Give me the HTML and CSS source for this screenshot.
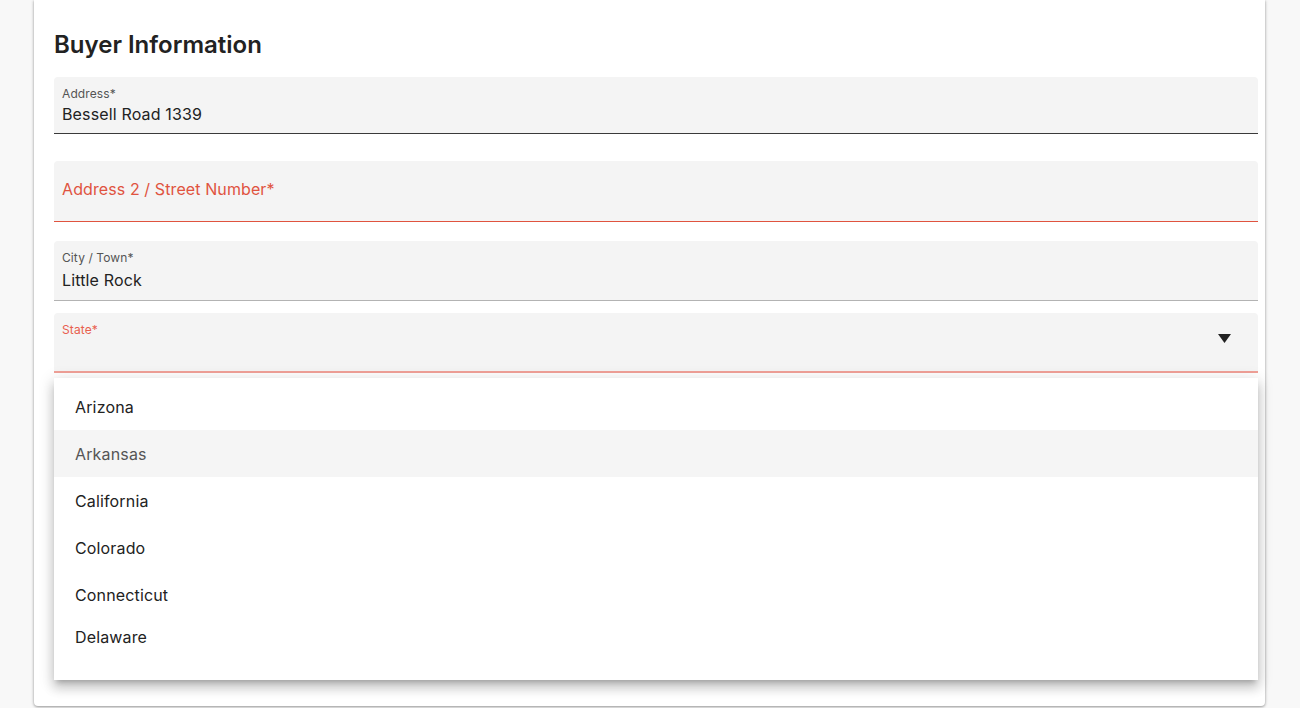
FILE: index.html
```html
<!DOCTYPE html>
<html lang="en">
<head>
<meta charset="utf-8">
<title>Buyer Information</title>
<link rel="stylesheet" href="styles.css">
</head>
<body>
<div class="page">
  <section class="card">
    <h2 class="title">Buyer Information</h2>
    <div class="field field-filled field-address">
      <div class="label">Address*</div>
      <div class="value">Bessell Road 1339</div>
    </div>
    <div class="field field-error field-address2">
      <div class="placeholder">Address 2 / Street Number*</div>
    </div>
    <div class="field field-filled field-city">
      <div class="label">City / Town*</div>
      <div class="value">Little Rock</div>
    </div>
    <div class="field field-select">
      <div class="label label-error">State*</div>
      <svg class="arrow" width="13" height="9" viewBox="0 0 13 9"><path d="M0 0H13L6.5 9Z" fill="#222"/></svg>
    </div>
    <ul class="menu">
      <li class="option">Arizona</li>
      <li class="option option-active">Arkansas</li>
      <li class="option">California</li>
      <li class="option">Colorado</li>
      <li class="option">Connecticut</li>
      <li class="option option-last">Delaware</li>
    </ul>
  </section>
</div>
</body>
</html>
```

FILE: styles.css
```css
* { box-sizing: border-box; }
html, body {
  margin: 0;
  padding: 0;
  background: #f8f8f8;
  font-family: Inter, "Noto Sans", sans-serif;
  color: #222;
}
.page {
  height: 708px;
  overflow: hidden;
  padding-left: 34px;
}
.card {
  position: relative;
  width: 1231px;
  height: 706px;
  background: #fff;
  border-radius: 0 0 4px 4px;
  box-shadow: 0 1px 3px 0 rgba(0,0,0,.2), 0 1px 2px 0 rgba(0,0,0,.14), 0 0 4px 0 rgba(0,0,0,.14);
  padding: 29px 7px 0 20px;
}
.title {
  margin: 0 0 16px;
  font-size: 24px;
  line-height: 32px;
  font-weight: 600;
  color: #222;
}
.field {
  position: relative;
  background: #f4f4f4;
  border-radius: 4px 4px 0 0;
  padding: 10px 8px 0;
  border-bottom: 1px solid #3a3a3a;
}
.label {
  font-size: 12px;
  line-height: 14px;
  color: #555;
  letter-spacing: 0.1px;
}
.label-error { color: #e8604f; }
.value {
  margin-top: 3px;
  font-size: 16px;
  line-height: 20px;
  color: #222;
  letter-spacing: 0.15px;
}
.field-address { height: 57px; }
.field-address2 {
  margin-top: 27px;
  height: 61px;
  padding-top: 18px;
  border-bottom-color: #e0533f;
}
.placeholder {
  font-size: 16px;
  line-height: 20px;
  color: #e0533f;
  letter-spacing: 0.1px;
}
.field-city {
  margin-top: 19px;
  height: 60px;
  border-bottom-color: #b3b3b3;
}
.field-city .value { margin-top: 5px; }
.field-select {
  margin-top: 12px;
  height: 60px;
  border-bottom: 2px solid #f0a097;
}
.arrow {
  position: absolute;
  right: 27px;
  top: 21px;
}
.menu {
  position: absolute;
  left: 20px;
  top: 378px;
  width: 1204px;
  height: 302px;
  margin: 0;
  padding: 5px 0 0;
  list-style: none;
  background: #fff;
  box-shadow: 0 5px 5px -3px rgba(0,0,0,.2), 0 8px 10px 1px rgba(0,0,0,.14), 0 3px 14px 2px rgba(0,0,0,.12);
}
.option {
  height: 47px;
  padding-left: 21px;
  display: flex;
  align-items: center;
  font-size: 16px;
  color: #222;
  letter-spacing: 0.15px;
}
.option-active {
  background: #f5f5f5;
  color: #555;
}
.option-last { height: 38px; }
```
